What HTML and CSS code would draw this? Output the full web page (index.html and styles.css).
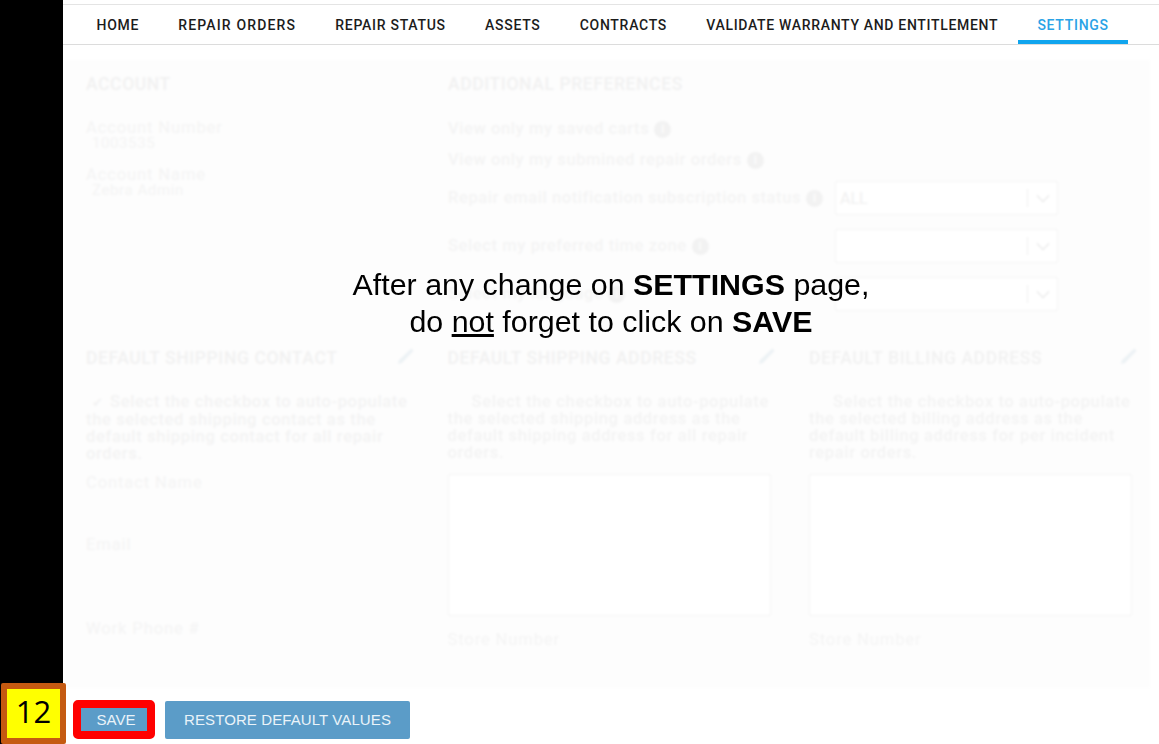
FILE: index.html
```html
<!DOCTYPE html>
<html lang="en">
<head>
<meta charset="utf-8">
<title>Settings</title>
<link rel="stylesheet" href="styles.css">
</head>
<body>
<div class="page">
  <aside class="rail"></aside>
  <main class="main">
    <nav class="nav">
      <a class="tab tab-tight">HOME</a>
      <a class="tab tab-loose">REPAIR ORDERS</a>
      <a class="tab">REPAIR STATUS</a>
      <a class="tab">ASSETS</a>
      <a class="tab">CONTRACTS</a>
      <a class="tab tab-tight">VALIDATE WARRANTY AND ENTITLEMENT</a>
      <a class="tab active">SETTINGS</a>
    </nav>
    <section class="panel">
      <div class="top-row">
        <div class="col">
          <h2 class="heading">ACCOUNT</h2>
          <div class="label acct-first">Account Number</div>
          <div class="value">1003535</div>
          <div class="label acct-next">Account Name</div>
          <div class="value">Zebra Admin</div>
        </div>
        <div class="prefs">
          <h2 class="heading">ADDITIONAL PREFERENCES</h2>
          <div class="pref-check first"><span class="label">View only my saved carts</span><span class="info">i</span></div>
          <div class="pref-check"><span class="label">View only my submined repair orders</span><span class="info">i</span></div>
          <div class="pref-select"><div class="pref-name"><span class="label">Repair email notification subscription status</span><span class="info">i</span></div><div class="select"><span class="select-value">ALL</span><span class="select-arrow"><svg class="chev" viewBox="0 0 16 10"><path d="M1 1.5l7 7 7-7"/></svg></span></div></div>
          <div class="pref-select"><div class="pref-name"><span class="label">Select my preferred time zone</span><span class="info">i</span></div><div class="select"><span class="select-value"></span><span class="select-arrow"><svg class="chev" viewBox="0 0 16 10"><path d="M1 1.5l7 7 7-7"/></svg></span></div></div>
          <div class="pref-select"><div class="pref-name"><span class="label">Select my language</span><span class="info">i</span></div><div class="select"><span class="select-value"></span><span class="select-arrow"><svg class="chev" viewBox="0 0 16 10"><path d="M1 1.5l7 7 7-7"/></svg></span></div></div>
        </div>
      </div>
      <div class="bottom-row">
        <div class="col">
          <div class="head-row"><h2 class="heading">DEFAULT SHIPPING CONTACT</h2><svg class="pencil" viewBox="0 0 20 20"><path d="M1 19l1-4L15 2.5l2.5 2.5L5 18z"/></svg></div>
          <p class="blurb"><span class="tick">✔</span>Select the checkbox to auto-populate the selected shipping contact as the default shipping contact for all repair orders.</p>
          <div class="label contact-name">Contact Name</div>
          <div class="label contact-email">Email</div>
          <div class="label contact-phone">Work Phone #</div>
        </div>
        <div class="col">
          <div class="head-row"><h2 class="heading">DEFAULT SHIPPING ADDRESS</h2><svg class="pencil" viewBox="0 0 20 20"><path d="M1 19l1-4L15 2.5l2.5 2.5L5 18z"/></svg></div>
          <p class="blurb"><span class="tick-gap"></span>Select the checkbox to auto-populate the selected shipping address as the default shipping address for all repair orders.</p>
          <div class="address"></div>
          <div class="label store">Store Number</div>
        </div>
        <div class="col">
          <div class="head-row"><h2 class="heading">DEFAULT BILLING ADDRESS</h2><svg class="pencil" viewBox="0 0 20 20"><path d="M1 19l1-4L15 2.5l2.5 2.5L5 18z"/></svg></div>
          <p class="blurb"><span class="tick-gap"></span>Select the checkbox to auto-populate the selected billing address as the default billing address for per incident repair orders.</p>
          <div class="address"></div>
          <div class="label store">Store Number</div>
        </div>
      </div>
    </section>
    <div class="actions">
      <button class="btn btn-save">SAVE</button>
      <button class="btn btn-restore">RESTORE DEFAULT VALUES</button>
    </div>
  </main>
</div>
<div class="message">After any change on <b>SETTINGS</b> page,<br>do <u>not</u> forget to click on <b>SAVE</b></div>
<div class="badge">12</div>
</body>
</html>
```

FILE: styles.css
```css
* { box-sizing: border-box; }
html, body { margin: 0; height: 100%; background: #fff; overflow: hidden; }
body { font-family: Roboto, "Liberation Sans", sans-serif; position: relative; }

.page { display: flex; height: 744px; }
.rail { width: 63px; flex: none; background: #000; }
.main { flex: 1; min-width: 0; padding-top: 4px; display: flex; flex-direction: column; }

.nav { display: flex; height: 41px; padding-left: 14px; border-top: 1px solid #e4e4e4; border-bottom: 1px solid #dcdcdc; }
.tab { display: flex; align-items: center; height: 39px; padding: 0 19.6px; font-size: 14px; font-weight: 500; letter-spacing: .72px; color: #1c1c1c; white-space: nowrap; }
.tab-tight { letter-spacing: .68px; }
.tab-loose { letter-spacing: 1.15px; }
.tab.active { color: #2aa3e6; height: 39px; border-bottom: 4px solid #10a5ee; padding-top: 4px; }

.panel { margin: 15px 9px 0 2px; padding: 13px 0 0 21px; height: 628px; background: #fdfdfd; filter: blur(.9px); color: #f3f3f3; }
.top-row { display: flex; height: 273px; }
.top-row > .col { width: 362px; flex: none; }
.bottom-row { display: flex; padding-top: 1px; }
.bottom-row > .col { width: 361.5px; flex: none; padding-right: 37px; }

.heading { margin: 0; font-size: 17.5px; line-height: 22px; font-weight: 500; color: #f1f1f1; letter-spacing: .6px; white-space: nowrap; }
.label { font-size: 16.5px; line-height: 20px; letter-spacing: .9px; color: #f4f4f4; white-space: nowrap; }
.value { font-size: 15px; line-height: 15px; margin: -2px 0 0 6px; letter-spacing: .6px; color: #f4f4f4; }
.acct-first { margin-top: 23px; }
.acct-next { margin-top: 14px; }

.prefs { flex: 1; }
.pref-check { display: flex; align-items: center; gap: 5px; height: 20px; margin-top: 11px; font-weight: 500; }
.pref-check .label, .pref-name .label { letter-spacing: .6px; }
.pref-check.first { margin-top: 24px; }
.pref-select { display: flex; align-items: center; height: 34px; margin-top: 14px; }
.pref-check + .pref-select { margin-top: 11px; }
.pref-name { width: 387px; display: flex; align-items: center; gap: 5px; font-weight: 500; }
.info { width: 17px; height: 17px; border-radius: 50%; background: #f2f2f2; color: #fdfdfd; font-size: 12px; line-height: 17px; text-align: center; flex: none; }
.select { width: 223px; height: 34px; display: flex; align-items: center; background: #fff; border: 1px solid #f4f4f4; border-radius: 2px; }
.select-value { flex: 1; padding-left: 4px; font-size: 16px; color: #f0f0f0; }
.select-arrow { width: 30px; height: 18px; border-left: 1px solid #f1f1f1; display: flex; align-items: center; justify-content: center; }
.chev { width: 14px; height: 9px; fill: none; stroke: #efefef; stroke-width: 2; }

.head-row { display: flex; align-items: center; justify-content: space-between; height: 22px; margin-right: -5px; }
.pencil { width: 19px; height: 19px; fill: #edf2f5; margin-top: -6px; }
.blurb { margin: 24px 0 0; font-size: 16.5px; line-height: 17px; letter-spacing: .65px; color: #f3f3f3; font-weight: 500; }
.tick { display: inline-block; width: 24px; padding-left: 6px; font-size: 13px; }
.tick-gap { display: inline-block; width: 24px; }
.contact-name { margin-top: 11px; }
.contact-email { margin-top: 42px; }
.contact-phone { margin-top: 64px; }
.address { width: 323px; height: 142px; margin-top: 13px; background: #fff; border: 1.5px solid #f4f4f4; border-radius: 2px; }
.store { margin-top: 14px; }

.actions { display: flex; align-items: center; gap: 10px; margin: 12px 0 0 10px; }
.btn { font-family: "Liberation Sans", Arial, sans-serif; font-size: 15px; color: #eaf3f9; background: #5b9cc8; border-radius: 2px; border: 0; padding: 0; }
.btn-save { width: 82px; height: 39px; border: 8px solid #f00; border-radius: 5px; padding-left: 4px; }
.btn-restore { width: 245px; height: 38px; letter-spacing: .1px; }

.message { position: absolute; left: 63px; right: 0; top: 266px; text-align: center; font-family: "Liberation Sans", Arial, sans-serif; font-size: 30.4px; line-height: 37px; color: #000; }

.badge { position: absolute; left: 1px; top: 683px; width: 65px; height: 61px; background: #ff0; border: 6px solid #c55a11; border-radius: 2px; font-family: "Open Sans", sans-serif; font-size: 31px; line-height: 45px; text-align: center; color: #000; }
```
